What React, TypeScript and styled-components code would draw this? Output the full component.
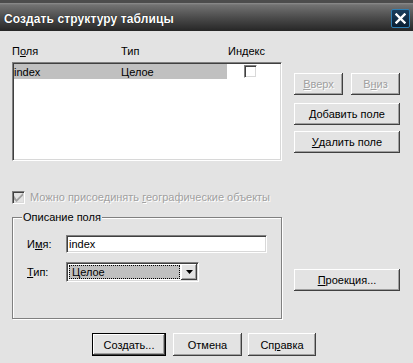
import React from "react";
import styled, { createGlobalStyle, css } from "styled-components";

const GlobalStyle = createGlobalStyle`
  html, body { margin: 0; padding: 0; background: #e3e3e3; }
  body { font-family: "Liberation Sans", Arial, sans-serif; font-size: 11px; color: #000; }
  * { box-sizing: border-box; }
`;

const Window = styled.div`
  width: 413px;
  height: 363px;
  background: #e3e3e3;
  display: flex;
  flex-direction: column;
  overflow: hidden;
`;

const TitleBar = styled.div`
  height: 31px;
  flex: none;
  display: flex;
  align-items: center;
  justify-content: space-between;
  padding: 6px 3px 0 4px;
  background: linear-gradient(
    #4c4c4c 0px,
    #4c4c4c 3px,
    #8e8e8e 3px,
    #727272 5px,
    #4a4a4a 18px,
    #262626 31px
  );
`;

const TitleText = styled.span`
  color: #fff;
  font-weight: bold;
  font-size: 12px;
  letter-spacing: 0.1px;
  text-shadow: 0 0 1px #000;
`;

const CloseButton = styled.div`
  width: 19px;
  height: 19px;
  border-radius: 2px;
  border: 1px solid #2f7fb3;
  background: linear-gradient(#1a3d5c, #0b1f33);
  display: flex;
  align-items: center;
  justify-content: center;
`;

const Body = styled.div`
  flex: 1;
  display: flex;
  flex-direction: column;
  padding: 13px 0 0 12px;
`;

const Main = styled.div`
  display: flex;
  align-items: flex-start;
`;

const LeftCol = styled.div`
  width: 270px;
  display: flex;
  flex-direction: column;
`;

const HeaderRow = styled.div`
  display: grid;
  grid-template-columns: 109px 107px 1fr;
  height: 14px;
  line-height: 14px;
`;

const sunken = css`
  border-top: 1px solid #808080;
  border-left: 1px solid #808080;
  border-bottom: 1px solid #fff;
  border-right: 1px solid #fff;
  box-shadow: inset 1px 1px 0 #404040, inset -1px -1px 0 #d8d8d8;
`;

const ListBox = styled.div`
  margin-top: 4px;
  height: 99px;
  background: #fff;
  ${sunken};
  padding: 1px;
`;

const ListRow = styled.div`
  display: grid;
  grid-template-columns: 107px 106px 1fr;
  height: 15px;
`;

const ListCell = styled.div<{ $selected?: boolean }>`
  display: flex;
  align-items: center;
  background: ${(p) => (p.$selected ? "#c0c0c0" : "transparent")};
`;

const IndexCell = styled.div`
  display: flex;
  align-items: center;
  padding-left: 17px;
`;

const CheckBox = styled.div<{ $disabled?: boolean }>`
  width: 13px;
  height: 13px;
  flex: none;
  background: ${(p) => (p.$disabled ? "#e3e3e3" : "#fff")};
  ${sunken};
  display: flex;
  align-items: center;
  justify-content: center;
`;

const CheckRow = styled.div`
  margin-top: 29px;
  height: 14px;
  display: flex;
  align-items: center;
  gap: 5px;
`;

const DisabledText = styled.span`
  color: #a0a0a0;
  text-shadow: 1px 1px 0 #fff;
`;

const GroupBox = styled.div`
  position: relative;
  margin-top: 13px;
  height: 102px;
  border: 1px solid #808080;
  box-shadow: 1px 1px 0 #fff, inset 1px 1px 0 #fff;
  padding: 17px 0 0 14px;
  display: flex;
  flex-direction: column;
`;

const GroupLegend = styled.span`
  position: absolute;
  top: -7px;
  left: 9px;
  background: #e3e3e3;
  padding: 0 1px;
  line-height: 13px;
`;

const FieldRow = styled.div<{ $gap?: number }>`
  display: flex;
  align-items: center;
  margin-top: ${(p) => p.$gap ?? 0}px;
`;

const FieldLabel = styled.span`
  width: 39px;
  flex: none;
`;

const InputField = styled.div`
  width: 201px;
  height: 18px;
  background: #fff;
  ${sunken};
  padding-left: 2px;
  display: flex;
  align-items: center;
`;

const SelectField = styled.div`
  width: 133px;
  height: 20px;
  background: #fff;
  ${sunken};
  padding: 1px;
  display: flex;
  align-items: stretch;
`;

const SelectValue = styled.div`
  flex: 1;
  background: #c0c0c0;
  border: 1px dotted #000;
  margin: 1px;
  padding-left: 2px;
  display: flex;
  align-items: center;
`;

const raised = css`
  background: #e3e3e3;
  box-shadow: inset -1px -1px 0 #404040, inset 1px 1px 0 #fff,
    inset -2px -2px 0 #a0a0a0;
`;

const ArrowButton = styled.div`
  width: 16px;
  flex: none;
  ${raised};
  display: flex;
  align-items: center;
  justify-content: center;
`;

const RightCol = styled.div`
  margin-left: 12px;
  width: 106px;
  display: flex;
  flex-direction: column;
  padding-top: 29px;
`;

const ButtonPair = styled.div`
  display: flex;
  gap: 8px;
`;

const Button = styled.button<{
  $w: number;
  $h?: number;
  $mt?: number;
  $ml?: number;
  $default?: boolean;
}>`
  width: ${(p) => p.$w}px;
  height: ${(p) => p.$h ?? 22}px;
  margin-top: ${(p) => p.$mt ?? 0}px;
  margin-left: ${(p) => p.$ml ?? 0}px;
  padding: 0;
  font-family: "Liberation Sans", Arial, sans-serif;
  font-size: 11px;
  color: #000;
  ${raised};
  border: ${(p) => (p.$default ? "1px solid #000" : "none")};
  display: flex;
  align-items: center;
  justify-content: center;
  &:disabled {
    color: #a0a0a0;
    text-shadow: 1px 1px 0 #fff;
  }
`;

const Footer = styled.div`
  margin-top: 14px;
  padding-left: 80px;
  display: flex;
`;

const Check = ({ color }: { color: string }) => (
  <svg width="9" height="9" viewBox="0 0 7 7">
    <path d="M0 2 L0 5 L2 7 L7 2 L7 0 L2 5 Z" fill={color} />
  </svg>
);

export default function App() {
  return (
    <>
      <GlobalStyle />
      <Window>
        <TitleBar>
          <TitleText>Создать структуру таблицы</TitleText>
          <CloseButton>
            <svg width="11" height="11" viewBox="0 0 11 11">
              <path
                d="M1.5 1.5 L9.5 9.5 M9.5 1.5 L1.5 9.5"
                stroke="#fff"
                strokeWidth="2.4"
                strokeLinecap="square"
              />
            </svg>
          </CloseButton>
        </TitleBar>
        <Body>
          <Main>
            <LeftCol>
              <HeaderRow>
                <span>
                  П<u>о</u>ля
                </span>
                <span>Тип</span>
                <span>Индекс</span>
              </HeaderRow>
              <ListBox>
                <ListRow>
                  <ListCell $selected>index</ListCell>
                  <ListCell $selected>Целое</ListCell>
                  <IndexCell>
                    <CheckBox />
                  </IndexCell>
                </ListRow>
              </ListBox>
              <CheckRow>
                <CheckBox $disabled>
                  <Check color="#a0a0a0" />
                </CheckBox>
                <DisabledText>
                  Можно присоединять <u>г</u>еографические объекты
                </DisabledText>
              </CheckRow>
              <GroupBox>
                <GroupLegend>Описание поля</GroupLegend>
                <FieldRow>
                  <FieldLabel>
                    И<u>м</u>я:
                  </FieldLabel>
                  <InputField>index</InputField>
                </FieldRow>
                <FieldRow $gap={9}>
                  <FieldLabel>
                    <u>Т</u>ип:
                  </FieldLabel>
                  <SelectField>
                    <SelectValue>Целое</SelectValue>
                    <ArrowButton>
                      <svg width="7" height="4" viewBox="0 0 7 4">
                        <path d="M0 0 H7 L3.5 4 Z" fill="#000" />
                      </svg>
                    </ArrowButton>
                  </SelectField>
                </FieldRow>
              </GroupBox>
            </LeftCol>
            <RightCol>
              <ButtonPair>
                <Button $w={49} disabled>
                  <u>В</u>верх
                </Button>
                <Button $w={49} disabled>
                  В<u>н</u>из
                </Button>
              </ButtonPair>
              <Button $w={106} $mt={8}>
                <u>Д</u>обавить поле
              </Button>
              <Button $w={106} $mt={6}>
                <u>У</u>далить поле
              </Button>
              <Button $w={106} $mt={116}>
                <u>П</u>роекция...
              </Button>
            </RightCol>
          </Main>
          <Footer>
            <Button $w={74} $h={23} $default>
              Создать...
            </Button>
            <Button $w={69} $h={23} $ml={7}>
              Отмена
            </Button>
            <Button $w={68} $h={23} $ml={6}>
              Сп<u>р</u>авка
            </Button>
          </Footer>
        </Body>
      </Window>
    </>
  );
}
